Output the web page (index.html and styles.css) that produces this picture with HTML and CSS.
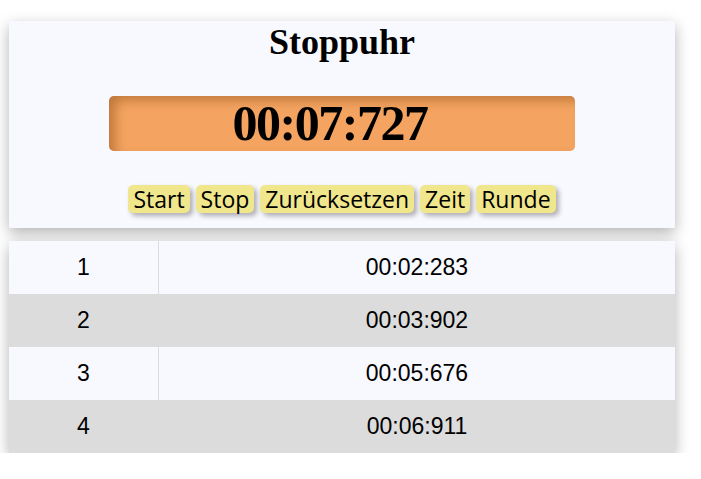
FILE: index.html
```html
<!DOCTYPE html>
<html lang="de">
<head>
<meta charset="utf-8">
<title>Stoppuhr</title>
<link rel="stylesheet" href="styles.css">
</head>
<body>
<div class="wrap">
  <section class="card">
    <h1 class="title">Stoppuhr</h1>
    <div class="display">00:07:727</div>
    <div class="buttons">
      <button class="btn">Start</button>
      <button class="btn">Stop</button>
      <button class="btn">Zurücksetzen</button>
      <button class="btn">Zeit</button>
      <button class="btn">Runde</button>
    </div>
  </section>
  <table class="laps">
    <tbody>
      <tr><td class="num">1</td><td class="time">00:02:283</td></tr>
      <tr><td class="num">2</td><td class="time">00:03:902</td></tr>
      <tr><td class="num">3</td><td class="time">00:05:676</td></tr>
      <tr><td class="num">4</td><td class="time">00:06:911</td></tr>
    </tbody>
  </table>
</div>
</body>
</html>
```

FILE: styles.css
```css
html, body {
  margin: 0;
  padding: 0;
  background: #ffffff;
}

.wrap {
  width: 666px;
  margin: 21px 0 0 9px;
  display: flex;
  flex-direction: column;
  gap: 13px;
}

.card {
  background: #f8f8ff;
  box-shadow: 0 5px 14px rgba(0, 0, 0, 0.3);
  padding: 1px 0 15px;
  display: flex;
  flex-direction: column;
  align-items: center;
}

.title {
  margin: 0;
  font-family: "Liberation Serif", "Times New Roman", serif;
  font-weight: bold;
  font-size: 36px;
  line-height: 41px;
  color: #000;
}

.display {
  box-sizing: border-box;
  margin-top: 33px;
  width: 466px;
  height: 55px;
  padding-right: 24px;
  background: #f4a460;
  border-radius: 5px;
  box-shadow: inset 8px 6px 12px -2px rgba(110, 55, 0, 0.4);
  font-family: "Liberation Serif", "Times New Roman", serif;
  font-weight: bold;
  font-size: 50px;
  letter-spacing: -1.5px;
  line-height: 55px;
  text-align: center;
  color: #000;
}

.buttons {
  margin-top: 34px;
  display: flex;
  justify-content: center;
  gap: 6px;
}

.btn {
  font-family: "Open Sans", "Noto Sans", sans-serif;
  font-size: 23px;
  line-height: 24px;
  padding: 2px 5px;
  border: none;
  border-radius: 5px;
  background: #f0e68c;
  color: #000;
  box-shadow: 3px 3px 5px rgba(0, 0, 0, 0.3);
  cursor: pointer;
}

.laps {
  width: 666px;
  border-collapse: collapse;
  box-shadow: 0 5px 14px rgba(0, 0, 0, 0.3);
  font-family: "Liberation Sans", Arial, sans-serif;
  font-size: 23px;
  color: #000;
}

.laps tr:nth-child(odd) {
  background: #f8f8ff;
}

.laps tr:nth-child(even) {
  background: #dcdcdc;
}

.laps td {
  height: 53px;
  padding: 0;
  text-align: center;
  vertical-align: middle;
}

.laps .num {
  width: 149px;
  border-right: 1px solid #dcdcdc;
}
```
